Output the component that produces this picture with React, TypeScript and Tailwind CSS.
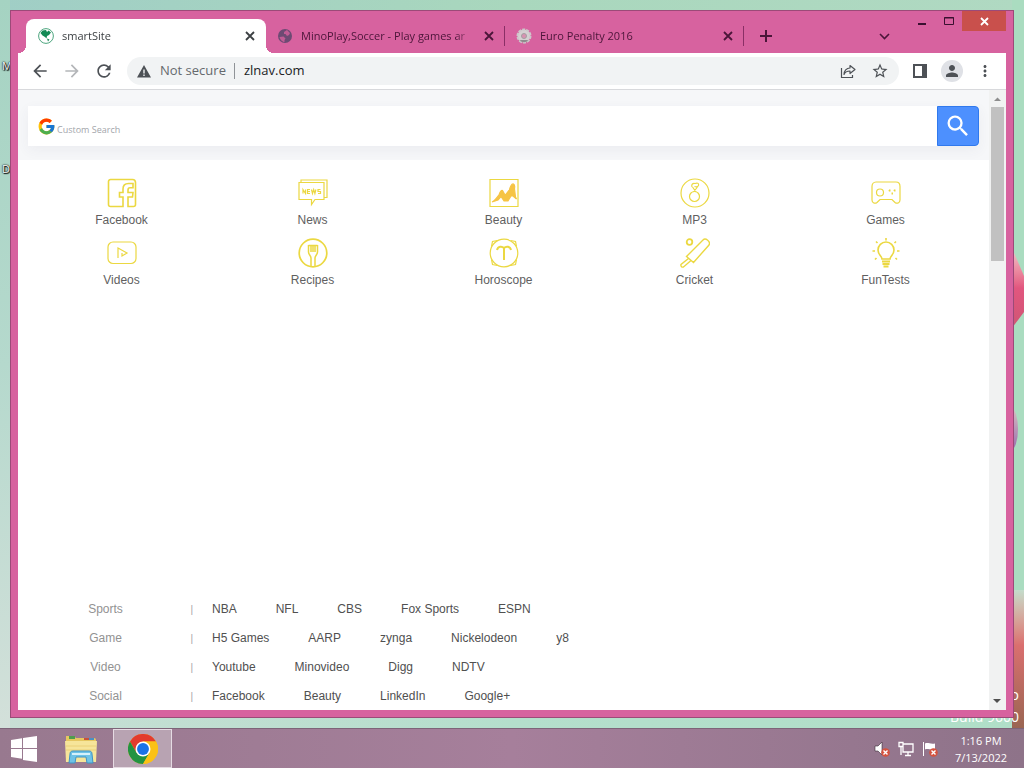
import React from 'react'
import { MdArrowBack, MdArrowForward, MdRefresh, MdStarBorder, MdPerson, MdMoreVert, MdSearch } from 'react-icons/md'
import { FcGoogle } from 'react-icons/fc'

const FacebookIcon = () => (
  <>
    <path d="M16 28.500H3.500a2 2 0 0 1-2-2v-23a2 2 0 0 1 2-2h22a3 3 0 0 1 3 3v22a2 2 0 0 1-2 2H21V19h4.500l.5-4.500h-5v-2.500c0-1.500.5-2.200 2-2.200h3V5.500h-4.500c-3.500 0-5.500 2-5.500 5.500v3.500h-3.500V19H16z" strokeWidth="1.600" />
  </>
)

const NewsIcon = () => (
  <>
    <path d="M1 4.500h25v17H17l-3.500 5v-5H1z" />
    <path d="M3 4.500V2h26v17.500h-3" />
    <path d="M5 15.500v-4l2.500 4v-4M12 11.500H9.500v4H12M9.500 13.500H12M13.500 11.500l1 4 1.200-4 1.200 4 1-4M22.500 11.500H20v2h2.500v2H20" />
  </>
)

const BeautyIcon = () => (
  <>
    <path d="M1 1.500h28v27H1z" />
    <path d="M3 24c3-1 5-5 7-7 1-3 2-5 3.500-4.500L16 17c2-1 3-4 4.500-5 .5-3 2-6.500 4-6 2 1 1 3 1 5l1 8 1 2-3.500-3-2 0-3 5-4 0-3-4.500-3 3.500z" fill="#f6c445" stroke="#f6c445" />
  </>
)

const Mp3Icon = () => (
  <>
    <circle cx="15" cy="15" r="14" />
    <circle cx="14.500" cy="18.500" r="5" />
    <path d="M13.500 14l4-5M16 14l-3.500-5M12 9c-1-3 1-4 3-3.500 3-1 4 0 3.500 2-1 2-2.500 1.500-4 1" />
  </>
)

const GamesIcon = () => (
  <>
    <path d="M5 4h20c2.500 0 4 2 4 4.500V22c0 3-3 4-5 2.500l-3-3H9l-3 3C4 26 1 25 1 22V8.500C1 6 2.500 4 5 4z" />
    <circle cx="9" cy="14.500" r="3.500" />
    <path d="M18 12.500h1.500M23 12.500h1.500M20.500 15.500H22M18 12l1 1M24 12l-1 1" strokeWidth="2" />
  </>
)

const VideosIcon = () => (
  <>
    <rect x="1" y="4" width="28" height="21.500" rx="5" />
    <path d="M11 20V10l9 5-5 3v-3" />
  </>
)

const RecipesIcon = () => (
  <>
    <circle cx="15" cy="15" r="13.800" strokeWidth="1.700" />
    <path d="M10.500 7v7c0 3 2.500 3.500 2.500 6v8M19.500 7v7c0 3-2.500 3.500-2.500 6v8M13 7.500V14M15 7.500V14M17 7.500V14M10.500 7.500h9" strokeWidth="1.500" />
  </>
)

const HoroscopeIcon = () => (
  <>
    <circle cx="15" cy="15" r="13.800" />
    <path d="M2.500 8.500l1-5 5-1M21.500 2.500l5 1 1 5M27.500 21.500l-1 5-5 1M8.500 27.500l-5-1-1-5" />
    <path d="M8 12c1-4 5-4 7-2 2-2 6-2 7 2M15 10v12" strokeWidth="2" />
  </>
)

const CricketIcon = () => (
  <>
    <circle cx="9.500" cy="4" r="2.800" strokeWidth="1.800" />
    <path d="M6.500 18.500L23 2c2.500-2.500 8 1.500 6 5L13.500 24.500zM8.500 20.500L1 26.500c-.5 2 1 3 2.500 2.500L11 22.500" strokeWidth="1.400" />
  </>
)

const FunTestsIcon = () => (
  <>
    <path d="M11 21c0-3-4-4-4-9a8 8 0 0 1 16 0c0 5-4 6-4 9z" strokeWidth="1.600" />
    <path d="M11 23.500h8M11.500 26h7M12.500 28.500h5" strokeWidth="2" />
    <path d="M15 0v2.500M5 3.500l1.500 1.500M25 3.500L23.500 5M1.500 13H4M26 13h2.500M4 21.500L5.500 20M26 21.500L24.500 20" strokeWidth="1.600" />
  </>
)

const shortcuts = [
  { label: 'Facebook', icon: <FacebookIcon /> },
  { label: 'News', icon: <NewsIcon /> },
  { label: 'Beauty', icon: <BeautyIcon /> },
  { label: 'MP3', icon: <Mp3Icon /> },
  { label: 'Games', icon: <GamesIcon /> },
  { label: 'Videos', icon: <VideosIcon /> },
  { label: 'Recipes', icon: <RecipesIcon /> },
  { label: 'Horoscope', icon: <HoroscopeIcon /> },
  { label: 'Cricket', icon: <CricketIcon /> },
  { label: 'FunTests', icon: <FunTestsIcon /> }
]

const directory = [
  { name: 'Sports', links: ['NBA', 'NFL', 'CBS', 'Fox Sports', 'ESPN'] },
  { name: 'Game', links: ['H5 Games', 'AARP', 'zynga', 'Nickelodeon', 'y8'] },
  { name: 'Video', links: ['Youtube', 'Minovideo', 'Digg', 'NDTV'] },
  { name: 'Social', links: ['Facebook', 'Beauty', 'LinkedIn', 'Google+'] }
]

const ChromeLogo = () => (
  <svg width="30" height="30" viewBox="0 0 48 48">
    <circle cx="24" cy="24" r="24" fill="#fbc116" />
    <path d="M3.200 12A24 24 0 0 1 44.800 12L24 12L13.600 30z" fill="#e33b2e" />
    <path d="M3.200 12A24 24 0 0 0 24 48L34.400 30L13.600 30z" fill="#229342" />
    <path d="M44.800 12H24L34.400 30L24 48A24 24 0 0 0 44.800 12z" fill="#fbc116" />
    <circle cx="24" cy="24" r="12" fill="#fff" />
    <circle cx="24" cy="24" r="9.500" fill="#1a73e8" />
  </svg>
)

const GlobeIcon = () => (
  <svg width="16" height="16" viewBox="0 0 16 16">
    <circle cx="8" cy="8" r="7.400" fill="#fff" stroke="#3a9c70" strokeWidth="0.900" />
    <path d="M2.500 5l2-2.500L8 2l1 2 1.500-1.500L13 4.500 11 7 9 8l-.5 2.500L7 9 4.500 7.500zM9 10.500l2.500 1-1.500 2z" fill="#138a55" />
  </svg>
)

const EarthIcon = () => (
  <svg width="16" height="16" viewBox="0 0 16 16">
    <circle cx="8" cy="8" r="7" fill="#6d4a73" />
    <path d="M2.500 9l4-.5 2 2-1 1.500v2c-2 0-4.500-2.500-5-5zM7 4l3-2 3 3-1 2-2 1-1.500-2H7z" fill="#c05c95" />
  </svg>
)

const BallIcon = () => (
  <svg width="16" height="16" viewBox="0 0 16 16">
    <circle cx="8" cy="8" r="6.500" fill="#d5d0d2" stroke="#cdc7ca" strokeWidth="2" strokeDasharray="3 1" />
    <circle cx="8" cy="8" r="2.500" fill="#d992b2" stroke="#a39fa1" />
    <path d="M3.500 12.500a6.500 6.500 0 0 0 9 0L10.500 12h-5z" fill="#8f8b8d" />
  </svg>
)

const CrossIcon = () => (
  <svg width="16" height="16" viewBox="0 0 16 16" fill="none" stroke="currentColor" strokeWidth="1.800">
    <path d="M4 4l8 8M12 4l-8 8" />
  </svg>
)

const FolderIcon = () => (
  <svg width="34" height="32" viewBox="0 0 34 32">
    <path d="M2 3h8l2 2h18a2 2 0 0 1 2 2v20H2z" fill="#e6c760" />
    <path d="M5 3h6v3H5z" fill="#4f9d4e" />
    <path d="M20 5h5v2h-5z" fill="#c8513b" />
    <path d="M25 5h5v2h-5z" fill="#4a8fc2" />
    <path d="M1 8h32l-1 21H2z" fill="#f6e59a" />
    <path d="M2 13h30M2 17h30" stroke="#ead078" />
    <path d="M5 30l1-9c0-2 1-3 3-3h16c2 0 3 1 3 3l1 9h-6l-1-6H12l-1 6z" fill="#6fc3e6" stroke="#3f93c4" />
    <path d="M8 21h18" stroke="#d5f1fb" strokeWidth="2" />
  </svg>
)

type TabProps = { title: string; icon: React.ReactNode; active?: boolean }

const Tab = ({ title, icon, active }: TabProps) => (
  <div
    className={
      active
        ? 'relative w-60 h-[34px] bg-white rounded-t-lg flex items-center gap-2 pl-3 pr-2 text-[#3c4043]'
        : 'relative w-[239px] h-[34px] flex items-center gap-2 pl-[11px] pr-2 text-[#4b1539]'
    }
  >
    {active && (
      <>
        <span className="absolute -left-2 bottom-0 size-2 bg-[radial-gradient(circle_at_0_0,transparent_8px,white_8px)]"></span>
        <span className="absolute -right-2 bottom-0 size-2 bg-[radial-gradient(circle_at_100%_0,transparent_8px,white_8px)]"></span>
      </>
    )}
    {!active && <span className="absolute right-0 top-[7px] h-5 w-px bg-[#8a2f66]"></span>}
    <span className="shrink-0">{icon}</span>
    <span className="flex-1 whitespace-nowrap text-[11px] mask-r-from-90%">{title}</span>
    <button aria-label={'Close ' + title} className="shrink-0">
      <CrossIcon />
    </button>
  </div>
)

const TitleBar = () => (
  <div className="flex items-end h-[42px] pl-2">
    <Tab title="smartSite" icon={<GlobeIcon />} active />
    <Tab title="MinoPlay,Soccer - Play games ar" icon={<EarthIcon />} />
    <Tab title="Euro Penalty 2016" icon={<BallIcon />} />
    <button aria-label="New tab" className="h-[34px] ml-3 text-[#4b1539]">
      <svg width="20" height="20" viewBox="0 0 20 20" fill="none" stroke="currentColor" strokeWidth="2">
        <path d="M10 4v12M4 10h12" />
      </svg>
    </button>
    <button aria-label="Search tabs" className="h-[34px] ml-auto mr-4 text-[#4b1539]">
      <svg width="16" height="16" viewBox="0 0 16 16" fill="none" stroke="currentColor" strokeWidth="1.600">
        <path d="M4 6l4.500 4.500L13 6" />
      </svg>
    </button>
    <div className="flex self-start h-5 text-[#3a1030]">
      <button aria-label="Minimize" className="w-[27px] flex justify-center items-center">
        <svg width="12" height="12" viewBox="0 0 12 12"><path d="M2 8h8v2H2z" fill="currentColor" /></svg>
      </button>
      <button aria-label="Maximize" className="w-[27px] flex justify-center items-center">
        <svg width="12" height="12" viewBox="0 0 12 12" fill="none" stroke="currentColor"><path d="M1.500 2.500h9v7h-9zM1 3h10" /></svg>
      </button>
      <button aria-label="Close" className="w-11 bg-[#c9504c] text-white flex justify-center items-center">
        <svg width="12" height="12" viewBox="0 0 12 12" fill="none" stroke="currentColor" strokeWidth="1.800"><path d="M3 3l7 7M10 3l-7 7" /></svg>
      </button>
    </div>
  </div>
)

const Toolbar = () => (
  <div className="flex items-center h-[37px] px-3 bg-white border-b border-[#d8d9dc] text-[#4d5156]">
    <div className="flex gap-3">
      <button aria-label="Back"><MdArrowBack size={20} /></button>
      <button aria-label="Forward" className="text-[#b4b6b9]"><MdArrowForward size={20} /></button>
      <button aria-label="Reload"><MdRefresh size={20} /></button>
    </div>
    <div className="flex-1 flex items-center h-7 ml-[13px] pl-[9px] pr-[10px] rounded-full bg-[#f1f3f4] text-[13px]">
      <svg width="16" height="16" viewBox="0 0 16 16">
        <path d="M8 2l7 12.500H1zM7.300 6.500v4h1.400v-4zM7.300 11.500V13h1.400v-1.500z" fill="currentColor" fillRule="evenodd" />
      </svg>
      <span className="ml-2 text-[#65696d]">Not secure</span>
      <span className="ml-2 mr-[9px] w-px h-4 bg-[#8f9397]"></span>
      <input aria-label="Address" defaultValue="zlnav.com" className="flex-1 min-w-0 bg-transparent text-[#202124] outline-none" />
      <button aria-label="Share" className="mr-[15px]">
        <svg width="16" height="16" viewBox="0 0 16 16" fill="none" stroke="currentColor" strokeWidth="1.200">
          <path d="M1.500 5v9.500h11V12" />
          <path d="M10 2.500l5 4-5 4V8C7 8 5 9 4 11.500 4 8 6.500 5 10 5z" strokeLinejoin="round" />
        </svg>
      </button>
      <button aria-label="Bookmark"><MdStarBorder size={18} /></button>
    </div>
    <div className="flex items-center gap-[13px] ml-[13px]">
      <button aria-label="Side panel">
        <svg width="16" height="16" viewBox="0 0 16 16"><path d="M1 1h14v14H1zM3 3v10h7V3z" fill="currentColor" fillRule="evenodd" /></svg>
      </button>
      <button aria-label="Profile" className="size-[22px] rounded-full bg-[#dfe1e6] flex items-center justify-center">
        <MdPerson size={18} />
      </button>
      <button aria-label="Menu"><MdMoreVert size={18} /></button>
    </div>
  </div>
)

const SearchHeader = () => (
  <div className="bg-[#f6f7f9] px-[10px] pt-4 pb-[14px]">
    <form className="flex h-10 shadow-[0_4px_12px_rgba(60,64,100,0.06)]">
      <label className="flex-1 flex items-center gap-px pl-[9px] bg-white">
        <FcGoogle size={19} />
        <input type="text" aria-label="Custom Search" placeholder="Custom Search" className="flex-1 pt-2 font-['Open_Sans','Noto_Sans',sans-serif] text-[9px] placeholder:text-[#a3a6ab] outline-none" />
      </label>
      <button type="button" aria-label="Search" className="w-[42px] rounded-r-sm bg-[#4d90fe] border border-[#3079ed] text-white flex items-center justify-center">
        <MdSearch size={28} />
      </button>
    </form>
  </div>
)

const Page = () => (
  <div className="flex-1 min-h-0 flex bg-white font-['Liberation_Sans',Arial,sans-serif] text-xs">
    <div className="flex-1 flex flex-col overflow-hidden">
      <SearchHeader />
      <nav className="grid grid-cols-5 gap-y-[6px] px-2 pt-[18px]">
        {shortcuts.map((item) => (
          <a key={item.label} href="#" className="flex flex-col items-center text-[#5f5f5f]">
            <svg width="30" height="30" viewBox="0 0 30 30" fill="none" stroke="#ebd841" strokeWidth="1.200">
              {item.icon}
            </svg>
            <span className="leading-6">{item.label}</span>
          </a>
        ))}
      </nav>

      {/* Link directory */}
      <div className="mt-auto pl-11">
        {directory.map((row) => (
          <div key={row.name} className="flex items-center h-[29px] whitespace-nowrap">
            <span className="w-[87px] text-center text-[#929292]">{row.name}</span>
            <span className="w-11 pt-0.5 text-right text-[10px] text-[#a5a5a5]">|</span>
            <div className="flex gap-[39px] ml-[19px] text-[#505050]">
              {row.links.map((link) => (
                <a key={link} href="#">{link}</a>
              ))}
            </div>
          </div>
        ))}
      </div>
    </div>

    {/* Scrollbar */}
    <div className="w-[17px] flex flex-col items-center bg-[#f1f2f2]">
      <svg width="17" height="17" viewBox="0 0 17 17"><path d="M5 11h7L8.500 7.500z" fill="#8d8d8d" /></svg>
      <div className="w-[13px] h-[154px] bg-[#c1c1c1]"></div>
      <svg className="mt-auto" width="17" height="17" viewBox="0 0 17 17"><path d="M4 6h8l-4 4z" fill="#505050" /></svg>
    </div>
  </div>
)

const ErrorBadge = () => (
  <>
    <circle cx="11.500" cy="11.500" r="4.300" fill="#d5523f" />
    <path d="M9.500 9.500l4 4M13.500 9.500l-4 4" stroke="#fff" strokeWidth="1.400" />
  </>
)

const Taskbar = () => (
  <div className="flex items-stretch h-10 border-t border-[#7d6478] bg-linear-to-r from-[#98798f] via-[#a67f9b] to-[#8e7389]">
    <button aria-label="Start" className="w-12 flex items-center justify-center">
      <svg width="26" height="26" viewBox="0 0 26 26" fill="#fff">
        <path d="M0 4l11-1.700V12H0zM12 2.100L26 0v12H12zM0 13h11v9.700L0 21zM12 13h14v13l-14-2.100z" />
      </svg>
    </button>
    <button aria-label="File Explorer" className="w-[65px] flex items-center justify-center">
      <FolderIcon />
    </button>
    <button aria-label="Google Chrome" className="w-[59px] flex items-center justify-center border border-[#e6dbe3] bg-[#b8a3b2]">
      <ChromeLogo />
    </button>
    <div className="flex items-center gap-2 ml-auto pr-2 text-white">
      <button aria-label="Volume">
        <svg width="16" height="16" viewBox="0 0 16 16">
          <path d="M1 5h3l4-4v13l-4-4H1z" fill="#fff" stroke="#3b2d38" strokeWidth="0.600" />
          <ErrorBadge />
        </svg>
      </button>
      <button aria-label="Network">
        <svg width="16" height="16" viewBox="0 0 16 16" fill="none" stroke="#fff" strokeWidth="1.300">
          <path d="M5 3h10v8H5zM10 11v3M7 14.500h6M1 1.500h4v4H1zM3 5.500V14" />
        </svg>
      </button>
      <button aria-label="Action Center">
        <svg width="16" height="16" viewBox="0 0 16 16">
          <path d="M1.500 1v14" stroke="#fff" />
          <path d="M3 2.500c3-1.500 5 1 10 0v6c-5 1-7-1.500-10 0z" fill="#fff" />
          <ErrorBadge />
        </svg>
      </button>
      <div className="w-[70px] text-center text-[11px] leading-[17px]">
        <div>1:16 PM</div>
        <div>7/13/2022</div>
      </div>
    </div>
  </div>
)

const App = () => {
  return (
    <div className="h-screen flex flex-col overflow-hidden font-['Open_Sans','Noto_Sans',sans-serif]">
      <div className="relative flex-1 min-h-0 flex px-[10px] pt-[10px] pb-[10px] bg-linear-to-r from-[#c8ded5] via-[#b4dfcc] to-[#b0dfc8]">
        {/* Wallpaper */}
        <div className="absolute inset-x-0 top-0 h-[10px] bg-linear-to-r from-[#a0cec6] via-[#a9d7bd] to-[#b0d9c2]"></div>
        <div className="absolute inset-y-0 left-0 w-[10px] bg-linear-to-b from-[#a5d3c2] via-[#b5d9cd] to-[#d3e0da]"></div>
        <div className="absolute right-0 top-0 bottom-0 w-3 overflow-hidden bg-[#aadcc0]">
          <div className="absolute left-0 top-[248px] h-[80px] w-3 [clip-path:polygon(0_0,100%_35%,100%_80%,0_100%)] bg-linear-to-b from-[#f0c6cc] via-[#e2567f] to-[#cf5574]"></div>
          <div className="absolute -left-2 top-[408px] w-[14px] h-[42px] rounded-[50%] bg-linear-to-b from-[#d9bcbf] to-[#9a6fae]"></div>
          <div className="absolute inset-x-0 top-[590px] bottom-0 bg-linear-to-b from-[#c3dccb] via-[#da6f6f] via-40% to-[#9a6552]"></div>
        </div>
        <span className="absolute left-0.5 top-[58px] text-[11px] text-white text-shadow-[0_0_1px_black,1px_1px_1px_black,0_0_2px_black]">M</span>
        <span className="absolute left-0.5 top-[161px] text-[11px] text-white text-shadow-[0_0_1px_black,1px_1px_1px_black,0_0_2px_black]">D</span>
        <div className="absolute right-[5px] bottom-0 text-right text-sm leading-[22px] text-white">
          <div>Windows 8.1 Pro</div>
          <div>Build 9600</div>
        </div>

        {/* Browser window */}
        <div className="relative flex-1 flex flex-col border border-[#9c4a78] bg-[#d7629f] px-[7px] pb-[7px]">
          <TitleBar />
          <Toolbar />
          <Page />
        </div>
      </div>
      <Taskbar />
    </div>
  )
}

export default App
